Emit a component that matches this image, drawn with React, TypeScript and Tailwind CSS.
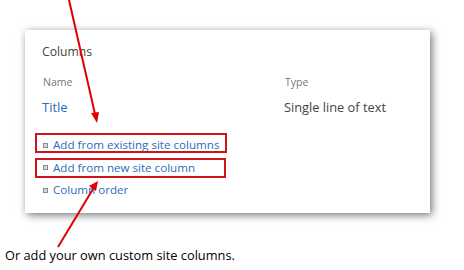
import React from 'react';

const font = { fontFamily: '"Open Sans", "Noto Sans", sans-serif' };

// petit carré gris devant chaque lien
const Bullet = () => (
  <span className="inline-block w-[5px] h-[5px] border border-[#8a8a8a] bg-[#d8d8d8] mr-[5px] shrink-0" />
);

const LinkRow = ({ label }: { label: string }) => (
  <div className="flex items-center h-[22.5px]">
    <Bullet />
    <span className="text-[11.6px] leading-none text-[#2a6ebb] whitespace-nowrap">{label}</span>
  </div>
);

export default function App() {
  return (
    <div className="relative w-[464px] h-[270px] bg-white overflow-hidden" style={font}>
      <div className="pt-[30px] pl-[25px]">
        <div className="w-[405px] h-[183px] bg-white shadow-[2px_2px_8px_rgba(0,0,0,0.55)] pl-[17px] pt-[14px]">
          <div className="text-[12.2px] leading-[16px] text-[#444]">Columns</div>

          <div className="flex mt-[15px] text-[10.5px] leading-[14px] text-[#777]">
            <div className="w-[243px] pl-[1px]">Name</div>
            <div>Type</div>
          </div>

          <div className="flex mt-[10px] text-[13px] leading-[16px]">
            <div className="w-[242px] text-[#2a6ebb]">Title</div>
            <div className="text-[12.8px] text-[#444]">Single line of text</div>
          </div>

          <div className="flex flex-col mt-[19px] pl-[1px]">
            <LinkRow label="Add from existing site columns" />
            <LinkRow label="Add from new site column" />
            <LinkRow label="Column order" />
          </div>
        </div>
      </div>

      <div className="mt-[34px] pl-[5px] text-[12.8px] leading-[16px] text-black">
        Or add your own custom site columns.
      </div>

      {/* cadres et flèches d'annotation */}
      <svg className="absolute inset-0 pointer-events-none" width="464" height="270" viewBox="0 0 464 270">
        <rect x="36" y="134" width="190" height="18" fill="none" stroke="#d0141c" strokeWidth="2" />
        <rect x="36" y="159" width="189" height="18" fill="none" stroke="#d0141c" strokeWidth="2" />
        <line x1="69" y1="0" x2="95" y2="114" stroke="#e00000" strokeWidth="2" />
        <polygon points="97,123 91,113 99,112" fill="#e00000" />
        <line x1="58" y1="247" x2="93" y2="189" stroke="#e00000" strokeWidth="2" />
        <polygon points="98,181 89,186 96,191" fill="#e00000" />
      </svg>
    </div>
  );
}
